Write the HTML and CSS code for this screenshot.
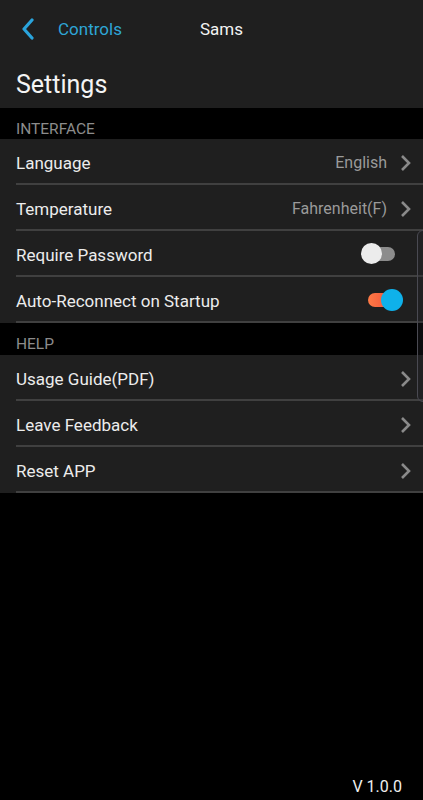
FILE: index.html
```html
<!DOCTYPE html>
<html lang="en">
<head>
    <meta charset="UTF-8">
    <meta name="viewport" content="width=device-width, initial-scale=1.0">
    <title>Settings</title>
    <link rel="stylesheet" href="styles.css">
</head>
<body>
    <div class="screen">
        <div class="header">
            <div class="topbar">
                <a class="back" href="#">
                    <svg width="14" height="22" viewBox="0 0 14 22"><path d="M11 2 L3 11 L11 20" fill="none" stroke="#2aa4dc" stroke-width="3.2" stroke-linecap="round" stroke-linejoin="round"/></svg>
                    <span>Controls</span>
                </a>
                <span class="title">Sams</span>
            </div>
            <h1>Settings</h1>
        </div>

        <div class="section">INTERFACE</div>
        <div class="row">
            <div class="row-body">
                <span class="label">Language</span>
                <span class="value">English</span>
                <svg class="chev" width="11" height="18" viewBox="0 0 11 18"><path d="M2 2 L9 9 L2 16" fill="none" stroke="#8a8a8a" stroke-width="2.6"/></svg>
            </div>
        </div>
        <div class="row">
            <div class="row-body">
                <span class="label">Temperature</span>
                <span class="value">Fahrenheit(F)</span>
                <svg class="chev" width="11" height="18" viewBox="0 0 11 18"><path d="M2 2 L9 9 L2 16" fill="none" stroke="#8a8a8a" stroke-width="2.6"/></svg>
            </div>
        </div>
        <div class="row">
            <div class="row-body">
                <span class="label">Require Password</span>
                <span class="toggle off"><span class="track"></span><span class="thumb"></span></span>
            </div>
        </div>
        <div class="row">
            <div class="row-body">
                <span class="label">Auto-Reconnect on Startup</span>
                <span class="toggle on"><span class="track"></span><span class="thumb"></span></span>
            </div>
        </div>

        <div class="section help">HELP</div>
        <div class="row">
            <div class="row-body">
                <span class="label">Usage Guide(PDF)</span>
                <svg class="chev" width="11" height="18" viewBox="0 0 11 18"><path d="M2 2 L9 9 L2 16" fill="none" stroke="#8a8a8a" stroke-width="2.6"/></svg>
            </div>
        </div>
        <div class="row">
            <div class="row-body">
                <span class="label">Leave Feedback</span>
                <svg class="chev" width="11" height="18" viewBox="0 0 11 18"><path d="M2 2 L9 9 L2 16" fill="none" stroke="#8a8a8a" stroke-width="2.6"/></svg>
            </div>
        </div>
        <div class="row">
            <div class="row-body">
                <span class="label">Reset APP</span>
                <svg class="chev" width="11" height="18" viewBox="0 0 11 18"><path d="M2 2 L9 9 L2 16" fill="none" stroke="#8a8a8a" stroke-width="2.6"/></svg>
            </div>
        </div>

        <div class="version">V 1.0.0</div>
        <div class="edge-handle"></div>
    </div>
</body>
</html>
```

FILE: styles.css
```css
body {
    margin: 0;
    background: #000;
    font-family: Roboto, "Noto Sans", sans-serif;
    color: #f0f0f0;
}
.screen {
    position: relative;
    width: 423px;
    height: 800px;
    display: flex;
    flex-direction: column;
    overflow: hidden;
}
.header {
    background: #1f1f1f;
    height: 108px;
}
.topbar {
    display: flex;
    align-items: center;
    height: 57px;
}
.back {
    display: flex;
    align-items: center;
    gap: 23px;
    padding-left: 21px;
    color: #2ea6d6;
    text-decoration: none;
    font-size: 17px;
    width: 179px;
}
.title {
    font-size: 17px;
    color: #f2f2f2;
}
h1 {
    margin: 0;
    padding: 13px 0 0 16px;
    font-size: 25px;
    font-weight: 400;
    color: #f4f4f4;
}
.section {
    height: 31px;
    line-height: 43px;
    padding-left: 16px;
    font-size: 15.5px;
    color: #8c8c8c;
    overflow: hidden;
}
.section.help {
    height: 32px;
}
.row {
    padding-left: 16px;
    background: #1f1f1f;
}
.row-body {
    box-sizing: border-box;
    display: flex;
    align-items: center;
    height: 46px;
    padding: 3px 12px 0 0;
    border-bottom: 2px solid #404040;
}
.row .label {
    flex: 1;
    font-size: 17px;
    color: #ececec;
}
.value {
    font-size: 16px;
    color: #9a9a9a;
    margin-right: 13px;
}
.chev {
    display: block;
}
.toggle {
    position: relative;
    width: 42px;
    height: 22px;
    margin-right: 8px;
    margin-top: -2px;
}
.toggle .track {
    position: absolute;
    top: 4px;
    height: 14px;
    border-radius: 7px;
}
.toggle .thumb {
    position: absolute;
    top: 0;
    width: 21px;
    height: 21px;
    border-radius: 50%;
}
.toggle.off .track {
    left: 8px;
    width: 26px;
    background: #8c8c8c;
}
.toggle.off .thumb {
    left: 0;
    background: #ececec;
}
.toggle.on .track {
    left: 7px;
    width: 24px;
    background: linear-gradient(90deg, #ff7a45, #f0503a);
}
.toggle.on .thumb {
    left: 20px;
    width: 22px;
    height: 22px;
    background: #0fb1ea;
}
.version {
    margin-top: auto;
    align-self: flex-end;
    padding: 0 21px 4px 0;
    font-size: 16px;
    color: #efefef;
}
.edge-handle {
    position: absolute;
    left: 417px;
    top: 230px;
    width: 12px;
    height: 170px;
    border: 1px solid #4a4a52;
    border-radius: 6px;
    background: rgba(40, 40, 46, 0.3);
}
```
